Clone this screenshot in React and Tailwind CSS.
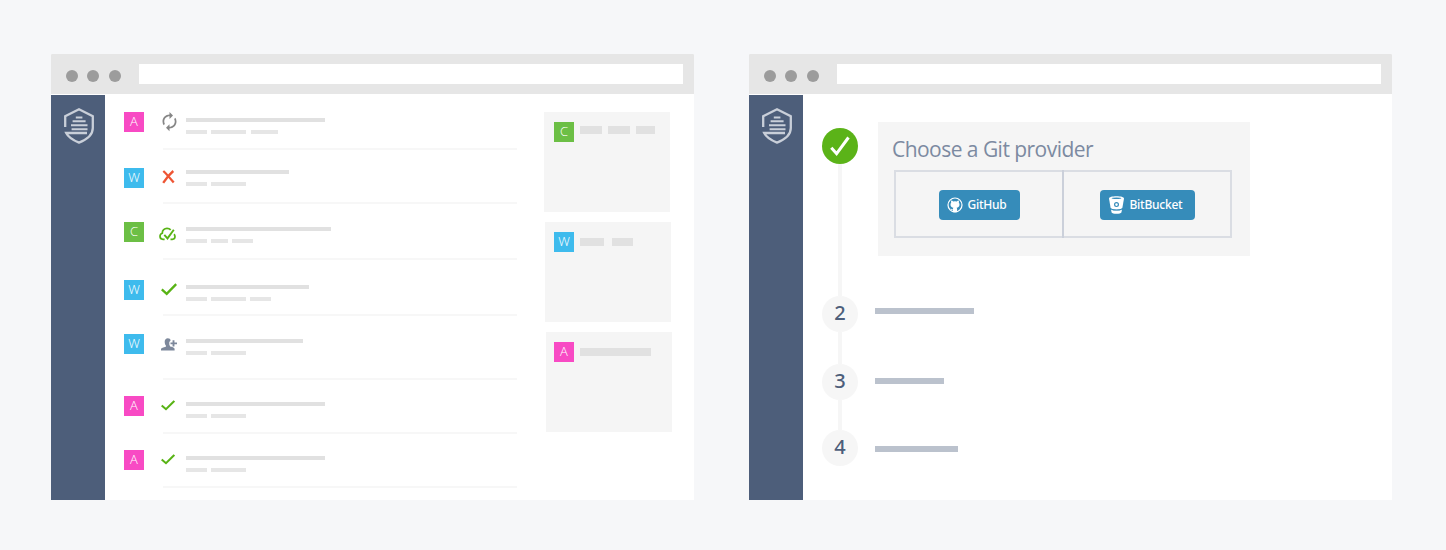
import React from "react";

const GREEN = "#58b315";

function ShieldLogo() {
  return (
    <svg width="32" height="38" viewBox="0 0 32 38" fill="none" stroke="#c9cfd9" strokeWidth="2.3">
      <path d="M2.2 20V9.3L16 2.3l13.8 7V21c0 7-6 11.600-13.800 14.600C10.500 33.400 5.300 30.200 3.200 26H24" />
      <path d="M12.800 10.400h6.600M9.600 14.300h13M8 18.300h16.500M8.600 22.300H24.500" strokeWidth="2" />
    </svg>
  );
}

function SyncIcon() {
  return (
    <svg width="21" height="21" viewBox="0 0 24 24" fill="#868686">
      <path d="M12 6v3l4-4-4-4v3c-4.420 0-8 3.580-8 8 0 1.570.460 3.030 1.240 4.260L6.700 14.800c-.450-.830-.700-1.790-.700-2.800 0-3.310 2.690-6 6-6zm6.760 1.740L17.300 9.200c.440.840.700 1.790.700 2.800 0 3.310-2.690 6-6 6v-3l-4 4 4 4v-3c4.420 0 8-3.580 8-8 0-1.570-.460-3.030-1.240-4.260z" />
    </svg>
  );
}

function CrossIcon() {
  return (
    <svg width="13" height="14" viewBox="0 0 13 14" fill="none" stroke="#ee5534" strokeWidth="2.300">
      <path d="M1.300 1Q4.500 3.800 11.700 12.600M11.300 1Q6 5.500 1.200 12.800" />
    </svg>
  );
}

function CloudCheckIcon() {
  return (
    <svg width="17" height="14" viewBox="0 0 17 14" fill="none" stroke={GREEN} strokeWidth="1.700">
      <path d="M5.600 12.300H4C2.300 12.300 1 11 1 9.300 1 7.700 2 6.600 3.300 6.200 3.200 3.200 5.500 1.400 8 1.400c1.600 0 2.800.5 3.700 1.500M11.500 12.300h1.800c1.600 0 2.700-1.200 2.700-2.700 0-1-.4-1.800-1.100-2.300" />
      <path d="M5.300 7.800l3.200 3.600 6.300-8.600" strokeWidth="1.900" />
    </svg>
  );
}

function CheckIcon({ small }) {
  return (
    <svg width={small ? 14 : 16} height={small ? 11 : 13} viewBox="0 0 16 13" preserveAspectRatio="none" fill="none" stroke={GREEN} strokeWidth="2.300">
      <path d="M.8 6.400l4.900 4.500L15.200 1.100" />
    </svg>
  );
}

function UserPlusIcon() {
  return (
    <svg width="16" height="13" viewBox="0 0 16 13" fill="#7d889b">
      <path d="M6.800.3c1.600 0 2.700.8 2.800 2.200L8.300 3.900v2.700l.8 1.900c1.800.5 4.300.8 4.500 2.300v1.700H0v-1.500c.3-1.300 2.300-1.600 4.900-2.300V7.500C4 6.600 3.700 5.300 3.700 3.600 3.700 1.600 5 .3 6.800.3z" />
      <path d="M12.500 2.300v6.200M9.500 5.400H16" stroke="#7d889b" strokeWidth="1.900" />
    </svg>
  );
}

const badgeColors = { A: "bg-[#f84ac4]", W: "bg-[#3ebbed]", C: "bg-[#6cbf45]" };

function Badge({ letter, className = "" }) {
  return (
    <div className={`flex h-5 w-5 shrink-0 items-center justify-center pb-px font-['Open_Sans',sans-serif] text-[13px] font-light leading-none text-white ${badgeColors[letter]} ${className}`}>
      {letter}
    </div>
  );
}

const rows = [
  { letter: "A", height: "h-[55px]", badge: "mt-[17px]", icon: <SyncIcon />, iconBox: "ml-[15px] mt-[16px] w-[27px]", lines: "mt-[22.500px]", gap: "mt-[8px]", title: "w-[139px]", subs: ["w-[21px]", "w-[35px] ml-1", "w-[27px] ml-[5px]"] },
  { letter: "W", height: "h-[54px]", badge: "mt-[18px]", icon: <CrossIcon />, iconBox: "ml-[18px] mt-[20px] w-[24px]", lines: "mt-[20px]", gap: "mt-[8px]", title: "w-[103px]", subs: ["w-[21px]", "w-[35px] ml-1"] },
  { letter: "C", height: "h-[56px]", badge: "mt-[18px]", icon: <CloudCheckIcon />, iconBox: "ml-[15px] mt-[23px] w-[27px]", lines: "mt-[23px]", gap: "mt-[8px]", title: "w-[145px]", subs: ["w-[21px]", "w-[17px] ml-1", "w-[21px] ml-[3.500px]"] },
  { letter: "W", height: "h-[56px]", badge: "mt-[20px]", icon: <CheckIcon />, iconBox: "ml-[17px] mt-[23px] w-[25px]", lines: "mt-[24.500px]", gap: "mt-[8px]", title: "w-[123px]", subs: ["w-[21px]", "w-[35px] ml-1", "w-[21px] ml-1"] },
  { letter: "W", height: "h-[64px]", badge: "mt-[18px]", icon: <UserPlusIcon />, iconBox: "ml-[17px] mt-[22px] w-[25px]", lines: "mt-[22.500px]", gap: "mt-[8px]", title: "w-[117px]", subs: ["w-[21px]", "w-[35px] ml-1"] },
  { letter: "A", height: "h-[54px]", badge: "mt-[16px]", icon: <CheckIcon small />, iconBox: "ml-[17px] mt-[20px] w-[25px]", lines: "mt-[21.500px]", gap: "mt-[8px]", title: "w-[139px]", subs: ["w-[21px]", "w-[35px] ml-1"] },
  { letter: "A", height: "h-[54px]", badge: "mt-[16px]", icon: <CheckIcon small />, iconBox: "ml-[17px] mt-[20px] w-[25px]", lines: "mt-[21.500px]", gap: "mt-[8px]", title: "w-[139px]", subs: ["w-[21px]", "w-[35px] ml-1"] },
];

function ActivityRow({ row }) {
  return (
    <div className={`flex flex-col ${row.height}`}>
      <div className="flex flex-1 items-start">
        <Badge letter={row.letter} className={row.badge} />
        <div className={`shrink-0 ${row.iconBox}`}>{row.icon}</div>
        <div className={row.lines}>
          <div className={`h-[4px] bg-[#e1e1e1] ${row.title}`} />
          <div className={`flex ${row.gap}`}>
            {row.subs.map((w, i) => (
              <div key={i} className={`h-[4px] bg-[#e6e6e6] ${w}`} />
            ))}
          </div>
        </div>
      </div>
      <div className="ml-[38.500px] h-[2px] shrink-0 bg-[#f7f7f7]" />
    </div>
  );
}

const projects = [
  { letter: "C", offset: "ml-0 pl-[10px]", bars: ["w-[22px]", "w-[22px] ml-1.5", "w-[19px] ml-1.5"], top: "mt-[4px]" },
  { letter: "W", offset: "ml-px pl-[9px]", bars: ["w-[24px]", "w-[21px] ml-2"], top: "mt-[6px]" },
  { letter: "A", offset: "ml-[2px] pl-[8px]", bars: ["w-[71px]"], top: "mt-[6px]" },
];

function Browser({ children }) {
  return (
    <section className="flex h-[446px] w-[643px] flex-col bg-white">
      <header className="flex h-10 shrink-0 items-center rounded-t-[1px] bg-[#e6e6e6] pl-[15px]">
        <div className="mt-[3px] flex gap-[9.300px]">
          <span className="h-3 w-3 rounded-full bg-[#9c9c9c]" />
          <span className="h-3 w-3 rounded-full bg-[#9c9c9c]" />
          <span className="h-3 w-3 rounded-full bg-[#9c9c9c]" />
        </div>
        <div className="ml-[18.400px] h-5 w-[544px] bg-white" />
      </header>
      <div className="mt-px flex flex-1">
        <aside className="flex w-[54px] shrink-0 justify-center bg-[#4d5e7a] pt-[12px] pl-[2px]">
          <ShieldLogo />
        </aside>
        {children}
      </div>
    </section>
  );
}

function GitHubMark() {
  return (
    <svg width="16" height="16" viewBox="0 0 16 16">
      <circle cx="8" cy="8" r="7" fill="none" stroke="#fff" strokeWidth="1.200" />
      <path fill="#fff" d="M4.200 3.500c.8 0 1.500.4 2 .9a8 8 0 0 1 3.600 0c.5-.5 1.200-.9 2-.9.3.8.2 1.500 0 2 .5.600.7 1.200.7 2 0 2.200-1.200 3-2.900 3.200.4.400.5.900.5 1.600v2.900H5.900v-2c-1.500.2-1.800-.8-2.500-1.400.9-.1 1.300.7 2.500.6 0-.7.100-1.300.5-1.700-1.700-.2-2.900-1-2.900-3.200 0-.8.2-1.400.7-2-.2-.5-.3-1.200 0-2z" />
    </svg>
  );
}

function BitbucketMark() {
  return (
    <svg width="15" height="18" viewBox="0 0 15 18">
      <path fill="#fff" d="M0 2.500C0 1 3.300.2 7.500.2S15 1 15 2.500l-1.600 9.300c-.3 1-3 1.700-5.900 1.700s-5.600-.7-5.900-1.700z" />
      <ellipse cx="7.500" cy="2.300" rx="4.900" ry=".8" fill="#368cba" />
      <circle cx="7.500" cy="8.600" r="1.900" fill="none" stroke="#368cba" strokeWidth="1.200" />
      <path fill="#fff" d="M2 13.400c1.500.9 3.300 1.200 5.500 1.200s4-.3 5.500-1.200l-.6 3c-.4.800-2.400 1.400-4.900 1.400s-4.500-.6-4.900-1.400z" />
      <path d="M1.800 12.900c1.500.9 3.300 1.200 5.700 1.200s4.200-.3 5.700-1.200" fill="none" stroke="#368cba" strokeWidth=".6" />
    </svg>
  );
}

function ProviderButton({ icon, label, className }) {
  return (
    <button className={`mt-px flex h-[30px] items-center rounded-[4px] bg-[#368cba] font-['Noto_Sans',sans-serif] text-[12px] leading-none font-medium tracking-[-0.25px] text-white ${className}`}>
      {icon}
      <span className="whitespace-nowrap">{label}</span>
    </button>
  );
}

function StepCircle({ children }) {
  return (
    <div className="flex h-9 w-9 shrink-0 items-center justify-center rounded-full bg-[#f6f6f6] pb-[3px] font-['Noto_Sans',sans-serif] text-[20px] leading-none font-medium text-[#4d5e7a]">
      {children}
    </div>
  );
}

export default function App() {
  return (
    <main className="flex h-[550px] w-[1446px] gap-[55px] overflow-hidden bg-[#f6f7f9] pl-[51px] pt-[54px]">
      <Browser>
        <div className="flex w-[412px] flex-col pl-[19px]">
          {rows.map((row, i) => (
            <ActivityRow key={i} row={row} />
          ))}
        </div>
        <div className="ml-[27px] flex flex-col gap-[10px] pt-[17px]">
          {projects.map((p) => (
            <div key={p.letter} className={`flex h-[100px] w-[126px] items-start bg-[#f5f5f5] pt-[10px] ${p.offset}`}>
              <Badge letter={p.letter} />
              <div className={`ml-1.5 flex ${p.top}`}>
                {p.bars.map((w, i) => (
                  <div key={i} className={`h-[8px] bg-[#e1e1e1] ${w}`} />
                ))}
              </div>
            </div>
          ))}
        </div>
      </Browser>

      <Browser>
        <div className="flex flex-col items-center pl-[19px] pt-[33px]">
          <div className="flex h-9 w-9 shrink-0 items-center justify-center rounded-full bg-[#5bb318]">
            <svg width="22" height="22" viewBox="0 0 22 22" fill="none" stroke="#fff" strokeWidth="3">
              <path d="M2.300 12.700l5.300 6L19.500 2.500" />
            </svg>
          </div>
          <div className="h-[132px] w-1 bg-[#f6f6f6]" />
          <StepCircle>2</StepCircle>
          <div className="h-[32px] w-1 bg-[#f6f6f6]" />
          <StepCircle>3</StepCircle>
          <div className="h-[30px] w-1 bg-[#f6f6f6]" />
          <StepCircle>4</StepCircle>
        </div>
        <div className="flex flex-col pl-[17px] pt-[27px]">
          <div className="ml-[3px] h-[134px] w-[372px] bg-[#f5f5f5] pt-[13px]">
            <h1 className="ml-[14px] h-[35px] whitespace-nowrap font-['Open_Sans',sans-serif] text-[21px] leading-[28px] tracking-[-0.54px] text-[#7c8aa1]">Choose a Git provider</h1>
            <div className="ml-4 flex h-[68px] w-[338px] border-2 border-[#dadde3]">
              <div className="flex w-[166px] items-center pl-[43px]">
                <ProviderButton icon={<GitHubMark />} label="GitHub" className="w-[81px] gap-[4.500px] pl-2" />
              </div>
              <div className="-my-0.5 w-0.5 bg-[#cbd0da]" />
              <div className="flex items-center pl-[36px]">
                <ProviderButton icon={<BitbucketMark />} label="BitBucket" className="w-[95px] gap-[5.500px] pl-[9px]" />
              </div>
            </div>
          </div>
          <div className="mt-[52px] h-[6px] w-[99px] bg-[#bbc2cd]" />
          <div className="mt-[64px] h-[6px] w-[69px] bg-[#bbc2cd]" />
          <div className="mt-[62px] h-[6px] w-[83px] bg-[#bbc2cd]" />
        </div>
      </Browser>
    </main>
  );
}
